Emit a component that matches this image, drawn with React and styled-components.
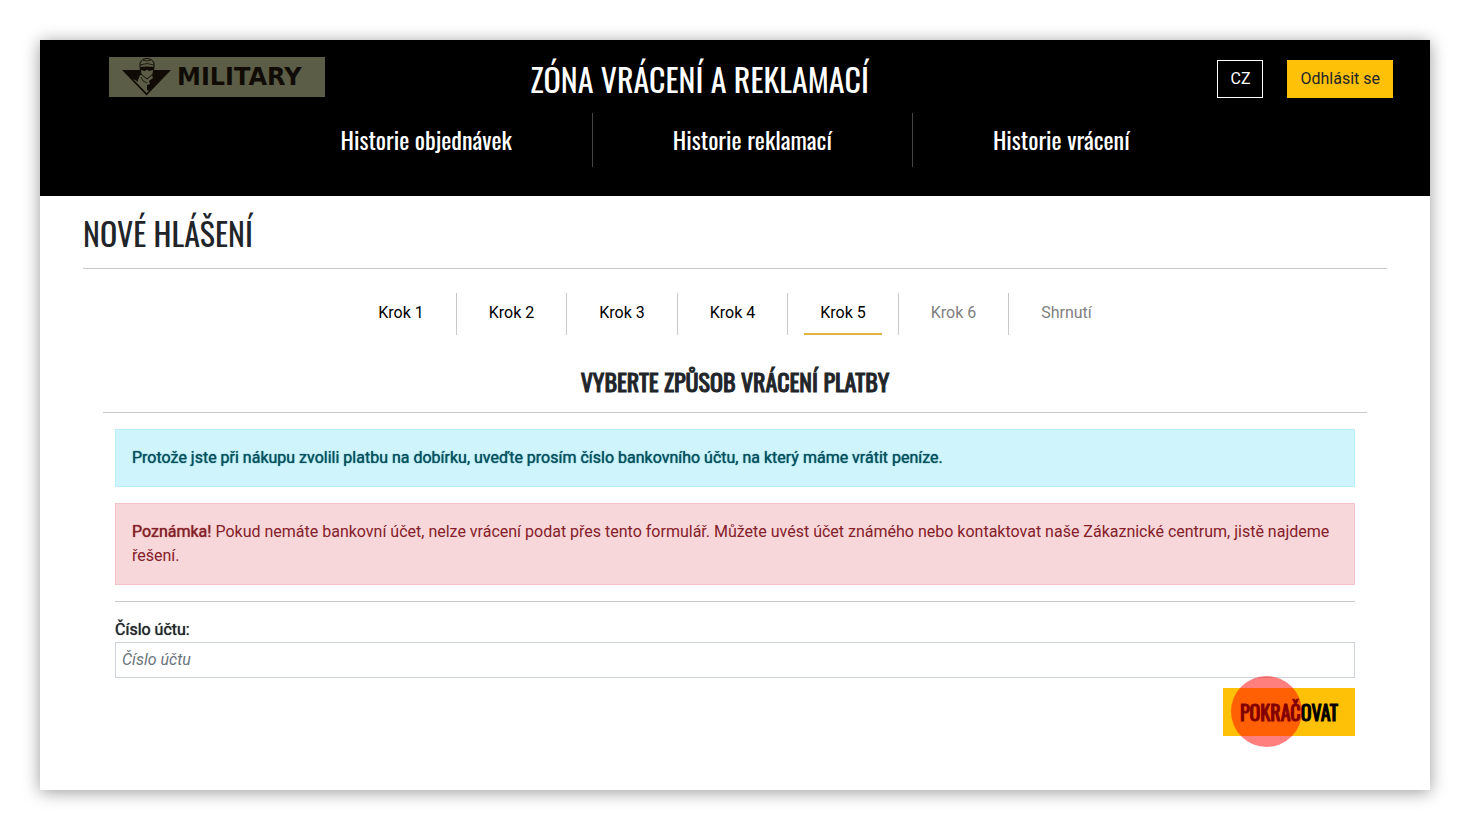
import React, { useState } from 'react'
import styled, { createGlobalStyle } from 'styled-components'

const menu = ['Historie objednávek', 'Historie reklamací', 'Historie vrácení']
const steps = ['Krok 1', 'Krok 2', 'Krok 3', 'Krok 4', 'Krok 5', 'Krok 6', 'Shrnutí']
const currentStep = 4

function Logo() {
  return (
    <LogoSvg viewBox="0 0 216 40" role="img" aria-label="Military">
      <rect width="216" height="40" fill="#5b5d46" />
      <path d="M13 13H62L37.5 38.5Z" fill="#100b05" />
      {/* jacket and collar */}
      <path d="M31 18H43L44 21L40 24L41 27L38 28V33L40 34L37.5 36L24 22L28 24Z" fill="#5b5d46" />
      <path d="M30 19L28 25M32 20L34 24L38 26" stroke="#100b05" strokeWidth="0.8" fill="none" />
      {/* cap, glasses and scarf */}
      <path d="M31 10V6Q33 1.5 38 1.5T45 6V10L44 17L38 22L32 17Z" fill="#5b5d46" stroke="#100b05" />
      <path d="M31 8Q38 5 45 8M34 3Q38 5 42 3" stroke="#100b05" strokeWidth="0.8" fill="none" />
      <path d="M31 10Q38 9 45 10L44 13L40 14L38 12.5L36 14L32 13Z" fill="#100b05" />
      <text x="68" y="28">MILITARY</text>
    </LogoSvg>
  )
}

function App() {
  const [ account, setAccount ] = useState('')

  return (
    <>
      <GlobalStyle />
      <Page>
        <Header>
          <TopBar>
            <LogoLink href="#"><Logo /></LogoLink>
            <SiteTitle>ZÓNA VRÁCENÍ A REKLAMACÍ</SiteTitle>
            <Actions>
              <LangButton type="button">CZ</LangButton>
              <LogoutButton type="button">Odhlásit se</LogoutButton>
            </Actions>
          </TopBar>
          <Menu>
            {menu.map((item) => (
              <MenuLink key={item} href="#">{item}</MenuLink>
            ))}
          </Menu>
        </Header>
        <Main>
          <PageTitle>NOVÉ HLÁŠENÍ</PageTitle>
          <Steps>
            {steps.map((step, index) => (
              <Step key={step}>
                <StepLink href="#" $active={index === currentStep} $disabled={index > currentStep}>
                  {step}
                </StepLink>
              </Step>
            ))}
          </Steps>
          <Section>
            <SectionTitle>VYBERTE ZPŮSOB VRÁCENÍ PLATBY</SectionTitle>
            <Form onSubmit={(e) => e.preventDefault()}>
              <Alert $kind="info">
                <Strong>Protože jste při nákupu zvolili platbu na dobírku, uveďte prosím číslo bankovního účtu, na který máme vrátit peníze.</Strong>
              </Alert>
              <Alert $kind="danger">
                <Strong>Poznámka!</Strong> Pokud nemáte bankovní účet, nelze vrácení podat přes tento formulář. Můžete uvést účet známého nebo kontaktovat naše Zákaznické centrum, jistě najdeme řešení.
              </Alert>
              <Field>
                <Label htmlFor="account">Číslo účtu:</Label>
                <Input
                  id="account"
                  placeholder="Číslo účtu"
                  value={account}
                  onChange={(e) => setAccount(e.target.value)}
                />
              </Field>
              <SubmitButton type="submit">
                POKRAČOVAT
                <ClickMark />
              </SubmitButton>
            </Form>
          </Section>
        </Main>
      </Page>
    </>
  )
}

export default App

const narrow = `Oswald, 'Liberation Sans Narrow', 'Liberation Sans', sans-serif`

const GlobalStyle = createGlobalStyle`
  * {
    box-sizing: border-box;
  }
  body {
    margin: 0;
    background-color: #fff;
    color: #212529;
    font-family: Roboto, sans-serif;
    font-size: 16px;
    line-height: 24px;
  }
  a {
    text-decoration: none;
  }
  button, input {
    font: inherit;
  }
`

const Page = styled.div`
  min-height: calc(100vh - 80px);
  margin: 40px;
  background-color: #fff;
  box-shadow: 0 2px 16px rgba(0, 0, 0, 0.4);
`

const Header = styled.header`
  padding: 16px 37px 29px 0;
  background-color: #000;
  color: #fff;
`

const TopBar = styled.div`
  display: grid;
  grid-template-columns: 28fr 22fr 30fr;
  align-items: center;
  height: 46px;
`

const LogoLink = styled.a`
  display: flex;
  padding: 0 0 4px 69px;
`

const LogoSvg = styled.svg`
  width: 216px;
  height: 40px;
  text {
    fill: #100b05;
    font: 700 24px 'DejaVu Sans', sans-serif;
  }
`

const SiteTitle = styled.h1`
  margin: 0;
  font: 400 32px/40px ${narrow};
  text-align: center;
  white-space: nowrap;
`

const Actions = styled.div`
  display: flex;
  justify-content: flex-end;
  gap: 24px;
`

const LangButton = styled.button`
  height: 38px;
  padding: 0 12px;
  border: 1px solid #fff;
  background-color: #000;
  color: #fff;
`

const LogoutButton = styled(LangButton)`
  border-color: #ffc107;
  background-color: #ffc107;
  color: #212529;
`

const Menu = styled.nav`
  display: flex;
  justify-content: center;
  margin: 11px -37px 0 0;
`

const MenuLink = styled.a`
  padding: 0 80px 2px;
  color: #fff;
  font: 400 24px/52px ${narrow};
  & + & {
    border-left: 1px solid #444;
  }
`

const Main = styled.main`
  padding: 16px 43px 54px;
`

const PageTitle = styled.h2`
  margin: 0;
  padding-bottom: 14px;
  border-bottom: 1px solid #c8c9ca;
  font: 400 32px/42px ${narrow};
`

const Steps = styled.ol`
  display: flex;
  justify-content: center;
  margin: 24px 0 0;
  padding: 0;
  list-style: none;
`

const Step = styled.li`
  padding: 0 16px;
  & + & {
    border-left: 1px solid #c8c9ca;
  }
`

const StepLink = styled.a`
  display: block;
  height: 42px;
  padding: 8px 16px;
  border-bottom: 2px solid ${props => props.$active ? '#dcb640' : 'transparent'};
  color: ${props => props.$disabled ? '#808080' : '#000'};
`

const Section = styled.section`
  padding: 28px 20px 0;
`

const SectionTitle = styled.h3`
  margin: 0;
  padding-bottom: 13px;
  border-bottom: 1px solid #c8c9ca;
  font: 400 24px/36px ${narrow};
  text-align: center;
  -webkit-text-stroke: 1px;
`

const Form = styled.form`
  display: flex;
  flex-direction: column;
  gap: 16px;
  padding: 16px 12px 0;
`

const Alert = styled.div`
  padding: 16px;
  border: 1px solid ${props => props.$kind === 'info' ? '#b6effb' : '#f1c2c7'};
  background-color: ${props => props.$kind === 'info' ? '#cff4fc' : '#f8d7da'};
  color: ${props => props.$kind === 'info' ? '#055160' : '#842029'};
`

const Strong = styled.strong`
  font-weight: 400;
  text-shadow: 0 0 1px currentColor;
`

const Field = styled.div`
  display: flex;
  flex-direction: column;
  padding-top: 16px;
  border-top: 1px solid #c8c9ca;
`

const Label = styled.label`
  text-shadow: 0 0 1px currentColor;
`

const Input = styled.input`
  width: 100%;
  height: 36px;
  padding: 0 6px 2px;
  border: 1px solid #ced4da;
  &::placeholder {
    color: #6c757d;
    font-style: italic;
    opacity: 1;
  }
`

const SubmitButton = styled.button`
  position: relative;
  align-self: flex-end;
  height: 48px;
  margin-top: -6px;
  padding: 0 17px;
  border: 0;
  background-color: #ffc107;
  color: #000;
  font: 400 20px/48px ${narrow};
  -webkit-text-stroke: 1px;
`

const ClickMark = styled.span`
  position: absolute;
  top: -12px;
  left: 8px;
  width: 71px;
  height: 71px;
  border-radius: 50%;
  background-color: rgba(255, 0, 0, 0.5);
`
